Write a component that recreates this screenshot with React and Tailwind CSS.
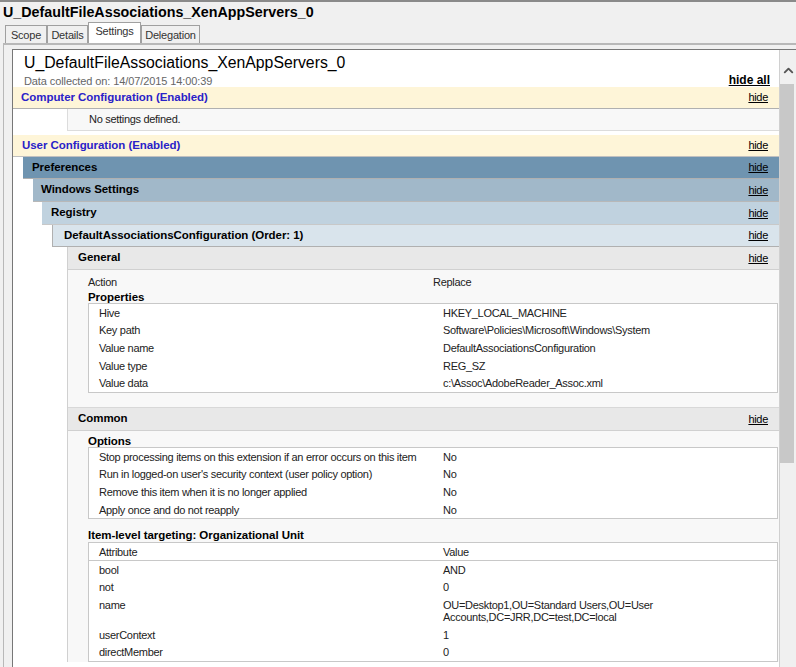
import React from 'react';
import { ChevronUp } from 'lucide-react';

const propertyRows = [
  ['Hive', 'HKEY_LOCAL_MACHINE'],
  ['Key path', 'Software\\Policies\\Microsoft\\Windows\\System'],
  ['Value name', 'DefaultAssociationsConfiguration'],
  ['Value type', 'REG_SZ'],
  ['Value data', 'c:\\Assoc\\AdobeReader_Assoc.xml'],
];

const optionRows = [
  ['Stop processing items on this extension if an error occurs on this item', 'No'],
  ["Run in logged-on user's security context (user policy option)", 'No'],
  ['Remove this item when it is no longer applied', 'No'],
  ['Apply once and do not reapply', 'No'],
];

const targetRows = [
  ['bool', 'AND'],
  ['not', '0'],
  ['name', 'OU=Desktop1,OU=Standard Users,OU=User Accounts,DC=JRR,DC=test,DC=local'],
  ['userContext', '1'],
  ['directMember', '0'],
];

const tabs = [
  { name: 'Scope', width: 'w-[42px]' },
  { name: 'Details', width: 'w-[41px]' },
  { name: 'Settings', width: 'w-[53px]' },
  { name: 'Delegation', width: 'w-[59px]' },
];

// Coloured header strip with the hide link on the right
const Band = ({ title, className, textClass = 'font-bold text-black' }) => (
  <div className={`flex items-center justify-between pr-[11px] text-[11.5px] tracking-[-0.05px] ${className}`}>
    <span className={textClass}>{title}</span>
    <span className="text-[11px] tracking-[-0.3px] font-normal underline text-black">hide</span>
  </div>
);

const Row = ({ label, value, padding = 'py-[2.8px]' }) => (
  <div className={`flex text-[11px] tracking-[-0.3px] leading-[12px] text-[#222] ${padding}`}>
    <div className="w-[354px] shrink-0 pl-[10px]">{label}</div>
    <div className="w-[230px]">{value}</div>
  </div>
);

export default function App() {
  return (
    <div className="w-[796px] h-[667px] overflow-hidden bg-[#f0f0f0] flex flex-col border-t-2 border-[#8a8a8a] font-['Liberation_Sans',Arial,sans-serif]">
      <div className="h-[22px] pl-[3px] pt-[1px] text-[14.3px] leading-[18px] font-bold text-black">
        U_DefaultFileAssociations_XenAppServers_0
      </div>

      {/* Tab strip */}
      <div className="h-[19px] pl-[5px] flex items-end relative z-10">
        {tabs.map(tab => (
          <div
            key={tab.name}
            className={
              tab.name === 'Settings'
                ? `${tab.width} h-[21px] text-center text-[11px] tracking-[-0.2px] leading-[17px] bg-white border border-b-0 border-[#a0a0a0] text-[#333]`
                : `${tab.width} h-[18px] text-center text-[11px] tracking-[-0.2px] leading-[18px] border border-b-0 border-[#a0a0a0] text-[#333]`
            }
          >
            {tab.name}
          </div>
        ))}
      </div>

      {/* Tab panel */}
      <div className="flex-1 min-h-0 ml-[3px] border-t-2 border-l border-[#b8b8b8] pl-[8px] pt-[4px]">
        <div className="h-full flex border-t border-l border-[#777] bg-white">
          <div className="w-[767px] shrink-0 overflow-hidden border-r border-[#d0d0d0]">
            <div className="h-[37px] pl-[11px] relative">
              <div className="pt-[4px] text-[15.8px] leading-[18px] text-black">U_DefaultFileAssociations_XenAppServers_0</div>
              <div className="pt-[3px] text-[11px] tracking-[-0.1px] leading-[13px] text-[#666]">Data collected on: 14/07/2015 14:00:39</div>
              <span className="absolute right-[9px] top-[24px] text-[12px] leading-[13px] font-bold underline text-black">hide all</span>
            </div>

            <Band title="Computer Configuration (Enabled)" className="h-[22px] pl-[8px] bg-[#fef5d8] border-b border-[#b0b0b0]" textClass="font-bold text-[#2a22c8]" />
            <div className="ml-[54px] h-[22px] pl-[21px] flex items-center text-[11px] tracking-[-0.3px] text-[#222] bg-[#f8f8f8] border-l border-b border-[#dcdcdc]">No settings defined.</div>

            <Band title="User Configuration (Enabled)" className="mt-[4px] h-[22px] pl-[9px] bg-[#fef5d8] border-b border-[#c0c0c0]" textClass="font-bold text-[#2a22c8]" />

            <Band title="Preferences" className="ml-[10px] h-[22px] pl-[9px] bg-[#6f94b0] border-b border-[#b0b0b0]" />
            <Band title="Windows Settings" className="ml-[20px] h-[23px] pl-[8px] bg-[#a1b8c9] border-b border-[#b8b8b8]" />
            <Band title="Registry" className="ml-[29px] h-[23px] pl-[9px] bg-[#c0d2df] border-b border-[#c8c8c8]" />
            <Band title="DefaultAssociationsConfiguration (Order: 1)" className="ml-[39px] h-[22px] pl-[11px] bg-[#d9e4ec] border-b border-l border-[#b0b0b0]" />

            <div className="ml-[54px] bg-[#f8f8f8] border-l border-[#d0d0d0]">
              <Band title="General" className="h-[23px] pl-[10px] bg-[#e8e8e8] border-b border-[#d0d0d0]" />
              <div className="h-[138px] pl-[20px] pr-[1px] border-b border-[#d8d8d8]">
                <div className="pt-[6px] flex text-[11px] tracking-[-0.3px] leading-[13px] text-[#222]">
                  <div className="w-[345px]">Action</div>
                  <div>Replace</div>
                </div>
                <div className="pt-[2px] text-[11.5px] tracking-[-0.05px] leading-[12px] font-bold text-black">Properties</div>
                <div className="bg-white border border-[#c8c8c8] w-[690px]">
                  {propertyRows.map(r => <Row key={r[0]} label={r[0]} value={r[1]} />)}
                </div>
              </div>

              <Band title="Common" className="h-[23px] pl-[10px] bg-[#e8e8e8] border-b border-[#d0d0d0]" />
              <div className="pl-[20px]">
                <div className="pt-[4px] text-[11.5px] tracking-[-0.05px] leading-[12px] font-bold text-black">Options</div>
                <div className="bg-white border border-[#c8c8c8] w-[690px]">
                  {optionRows.map(r => <Row key={r[0]} label={r[0]} value={r[1]} />)}
                </div>
                <div className="pt-[10px] text-[11.5px] tracking-[-0.05px] leading-[13px] font-bold text-black">Item-level targeting: Organizational Unit</div>
                <div className="bg-white border border-[#c8c8c8] w-[690px]">
                  <div className="border-b border-[#c8c8c8]">
                    <Row label="Attribute" value="Value" padding="py-[2.3px]" />
                  </div>
                  {targetRows.map(r => <Row key={r[0]} label={r[0]} value={r[1]} />)}
                </div>
              </div>
            </div>
          </div>

          {/* Scrollbar */}
          <div className="w-[16px] shrink-0 bg-[#f0f0f0] flex flex-col">
            <div className="h-[34px] pt-[13px] flex items-start justify-center text-[#555]">
              <ChevronUp size={15} strokeWidth={3} />
            </div>
            <div className="w-[14px] h-[379px] bg-[#c8c8c8]" />
          </div>
        </div>
      </div>
    </div>
  );
}
